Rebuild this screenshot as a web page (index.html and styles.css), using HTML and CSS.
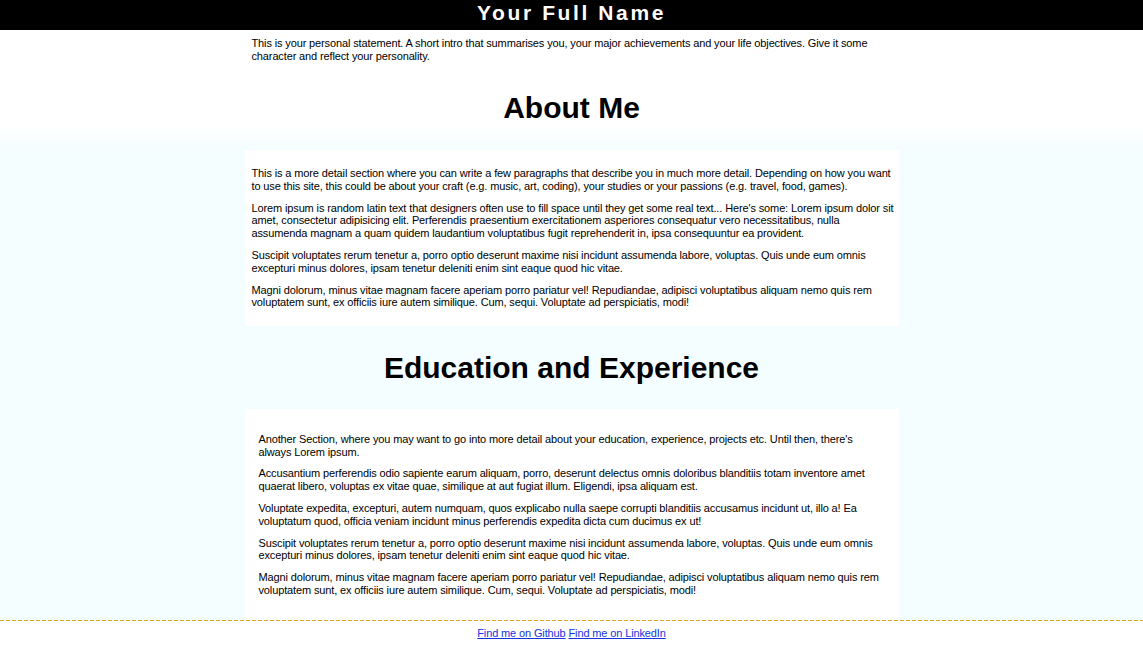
FILE: index.html
```html
<!DOCTYPE html>
<html lang="en">
<head>
<meta charset="utf-8">
<title>Your Full Name</title>
<link rel="stylesheet" href="styles.css">
</head>
<body>
<header class="site-header">
  <h1 class="site-title">Your Full Name</h1>
</header>
<main class="page">
  <p class="statement">This is your personal statement. A short intro that summarises you, your major achievements and your life objectives. Give it some character and reflect your personality.</p>

  <h2 class="section-title section-title--about">About Me</h2>
  <section class="card card--about">
    <p>This is a more detail section where you can write a few paragraphs that describe you in much more detail. Depending on how you want to use this site, this could be about your craft (e.g. music, art, coding), your studies or your passions (e.g. travel, food, games).</p>
    <p>Lorem ipsum is random latin text that designers often use to fill space until they get some real text... Here's some: Lorem ipsum dolor sit amet, consectetur adipisicing elit. Perferendis praesentium exercitationem asperiores consequatur vero necessitatibus, nulla assumenda magnam a quam quidem laudantium voluptatibus fugit reprehenderit in, ipsa consequuntur ea provident.</p>
    <p>Suscipit voluptates rerum tenetur a, porro optio deserunt maxime nisi incidunt assumenda labore, voluptas. Quis unde eum omnis excepturi minus dolores, ipsam tenetur deleniti enim sint eaque quod hic vitae.</p>
    <p>Magni dolorum, minus vitae magnam facere aperiam porro pariatur vel! Repudiandae, adipisci voluptatibus aliquam nemo quis rem voluptatem sunt, ex officiis iure autem similique. Cum, sequi. Voluptate ad perspiciatis, modi!</p>
  </section>

  <h2 class="section-title section-title--edu">Education and Experience</h2>
  <section class="card card--edu">
    <p>Another Section, where you may want to go into more detail about your education, experience, projects etc. Until then, there's always Lorem ipsum.</p>
    <p>Accusantium perferendis odio sapiente earum aliquam, porro, deserunt delectus omnis doloribus blanditiis totam inventore amet quaerat libero, voluptas ex vitae quae, similique at aut fugiat illum. Eligendi, ipsa aliquam est.</p>
    <p>Voluptate expedita, excepturi, autem numquam, quos explicabo nulla saepe corrupti blanditiis accusamus incidunt ut, illo a! Ea voluptatum quod, officia veniam incidunt minus perferendis expedita dicta cum ducimus ex ut!</p>
    <p>Suscipit voluptates rerum tenetur a, porro optio deserunt maxime nisi incidunt assumenda labore, voluptas. Quis unde eum omnis excepturi minus dolores, ipsam tenetur deleniti enim sint eaque quod hic vitae.</p>
    <p>Magni dolorum, minus vitae magnam facere aperiam porro pariatur vel! Repudiandae, adipisci voluptatibus aliquam nemo quis rem voluptatem sunt, ex officiis iure autem similique. Cum, sequi. Voluptate ad perspiciatis, modi!</p>
  </section>
</main>
<footer class="site-footer">
  <a class="footer-link" href="#">Find me on Github</a> <a class="footer-link" href="#">Find me on LinkedIn</a>
</footer>
</body>
</html>
```

FILE: styles.css
```css
html, body {
  margin: 0;
  padding: 0;
}

body {
  font-family: "Liberation Sans", Arial, Helvetica, sans-serif;
  font-size: 11px;
  line-height: 12.8px;
  letter-spacing: -0.13px;
  color: #000;
  background: linear-gradient(to bottom, #ffffff 0, #ffffff 128px, #f4fdff 150px, #f4fdff 100%);
}

.site-header {
  background: #000;
  height: 30px;
  box-sizing: border-box;
  padding-bottom: 4px;
}

.site-title {
  margin: 0;
  color: #fff;
  font-size: 21px;
  line-height: 26px;
  font-weight: bold;
  letter-spacing: 2.6px;
  text-align: center;
}

.page {
  width: 654px;
  margin: 0 auto;
}

.statement {
  margin: 7px 0 0;
  padding: 0 7px;
}

.section-title {
  font-size: 30px;
  line-height: 34.5px;
  font-weight: bold;
  letter-spacing: 0;
  text-align: center;
  margin: 0;
}

.section-title--about {
  margin-top: 28px;
  margin-bottom: 25px;
}

.section-title--edu {
  margin-top: 25px;
  margin-bottom: 23px;
}

.card {
  background: #fff;
}

.card p {
  margin: 0 0 9px;
}

.card p:last-child {
  margin-bottom: 0;
}

.card--about {
  padding: 17px 3px 17px 7px;
}

.card--edu {
  padding: 24px 14px 23px 14px;
}

.site-footer {
  position: relative;
  background: #fff;
  height: 32px;
  box-sizing: border-box;
  padding-top: 7px;
  text-align: center;
}

.site-footer::before {
  content: "";
  display: block;
  position: absolute;
  left: 0;
  right: 0;
  top: 0;
  height: 1px;
  background: repeating-linear-gradient(to right, #daa520 0, #daa520 4px, #ffffff 4px, #ffffff 6px);
}

.footer-link {
  color: #1533e0;
  text-decoration: underline;
}
```
